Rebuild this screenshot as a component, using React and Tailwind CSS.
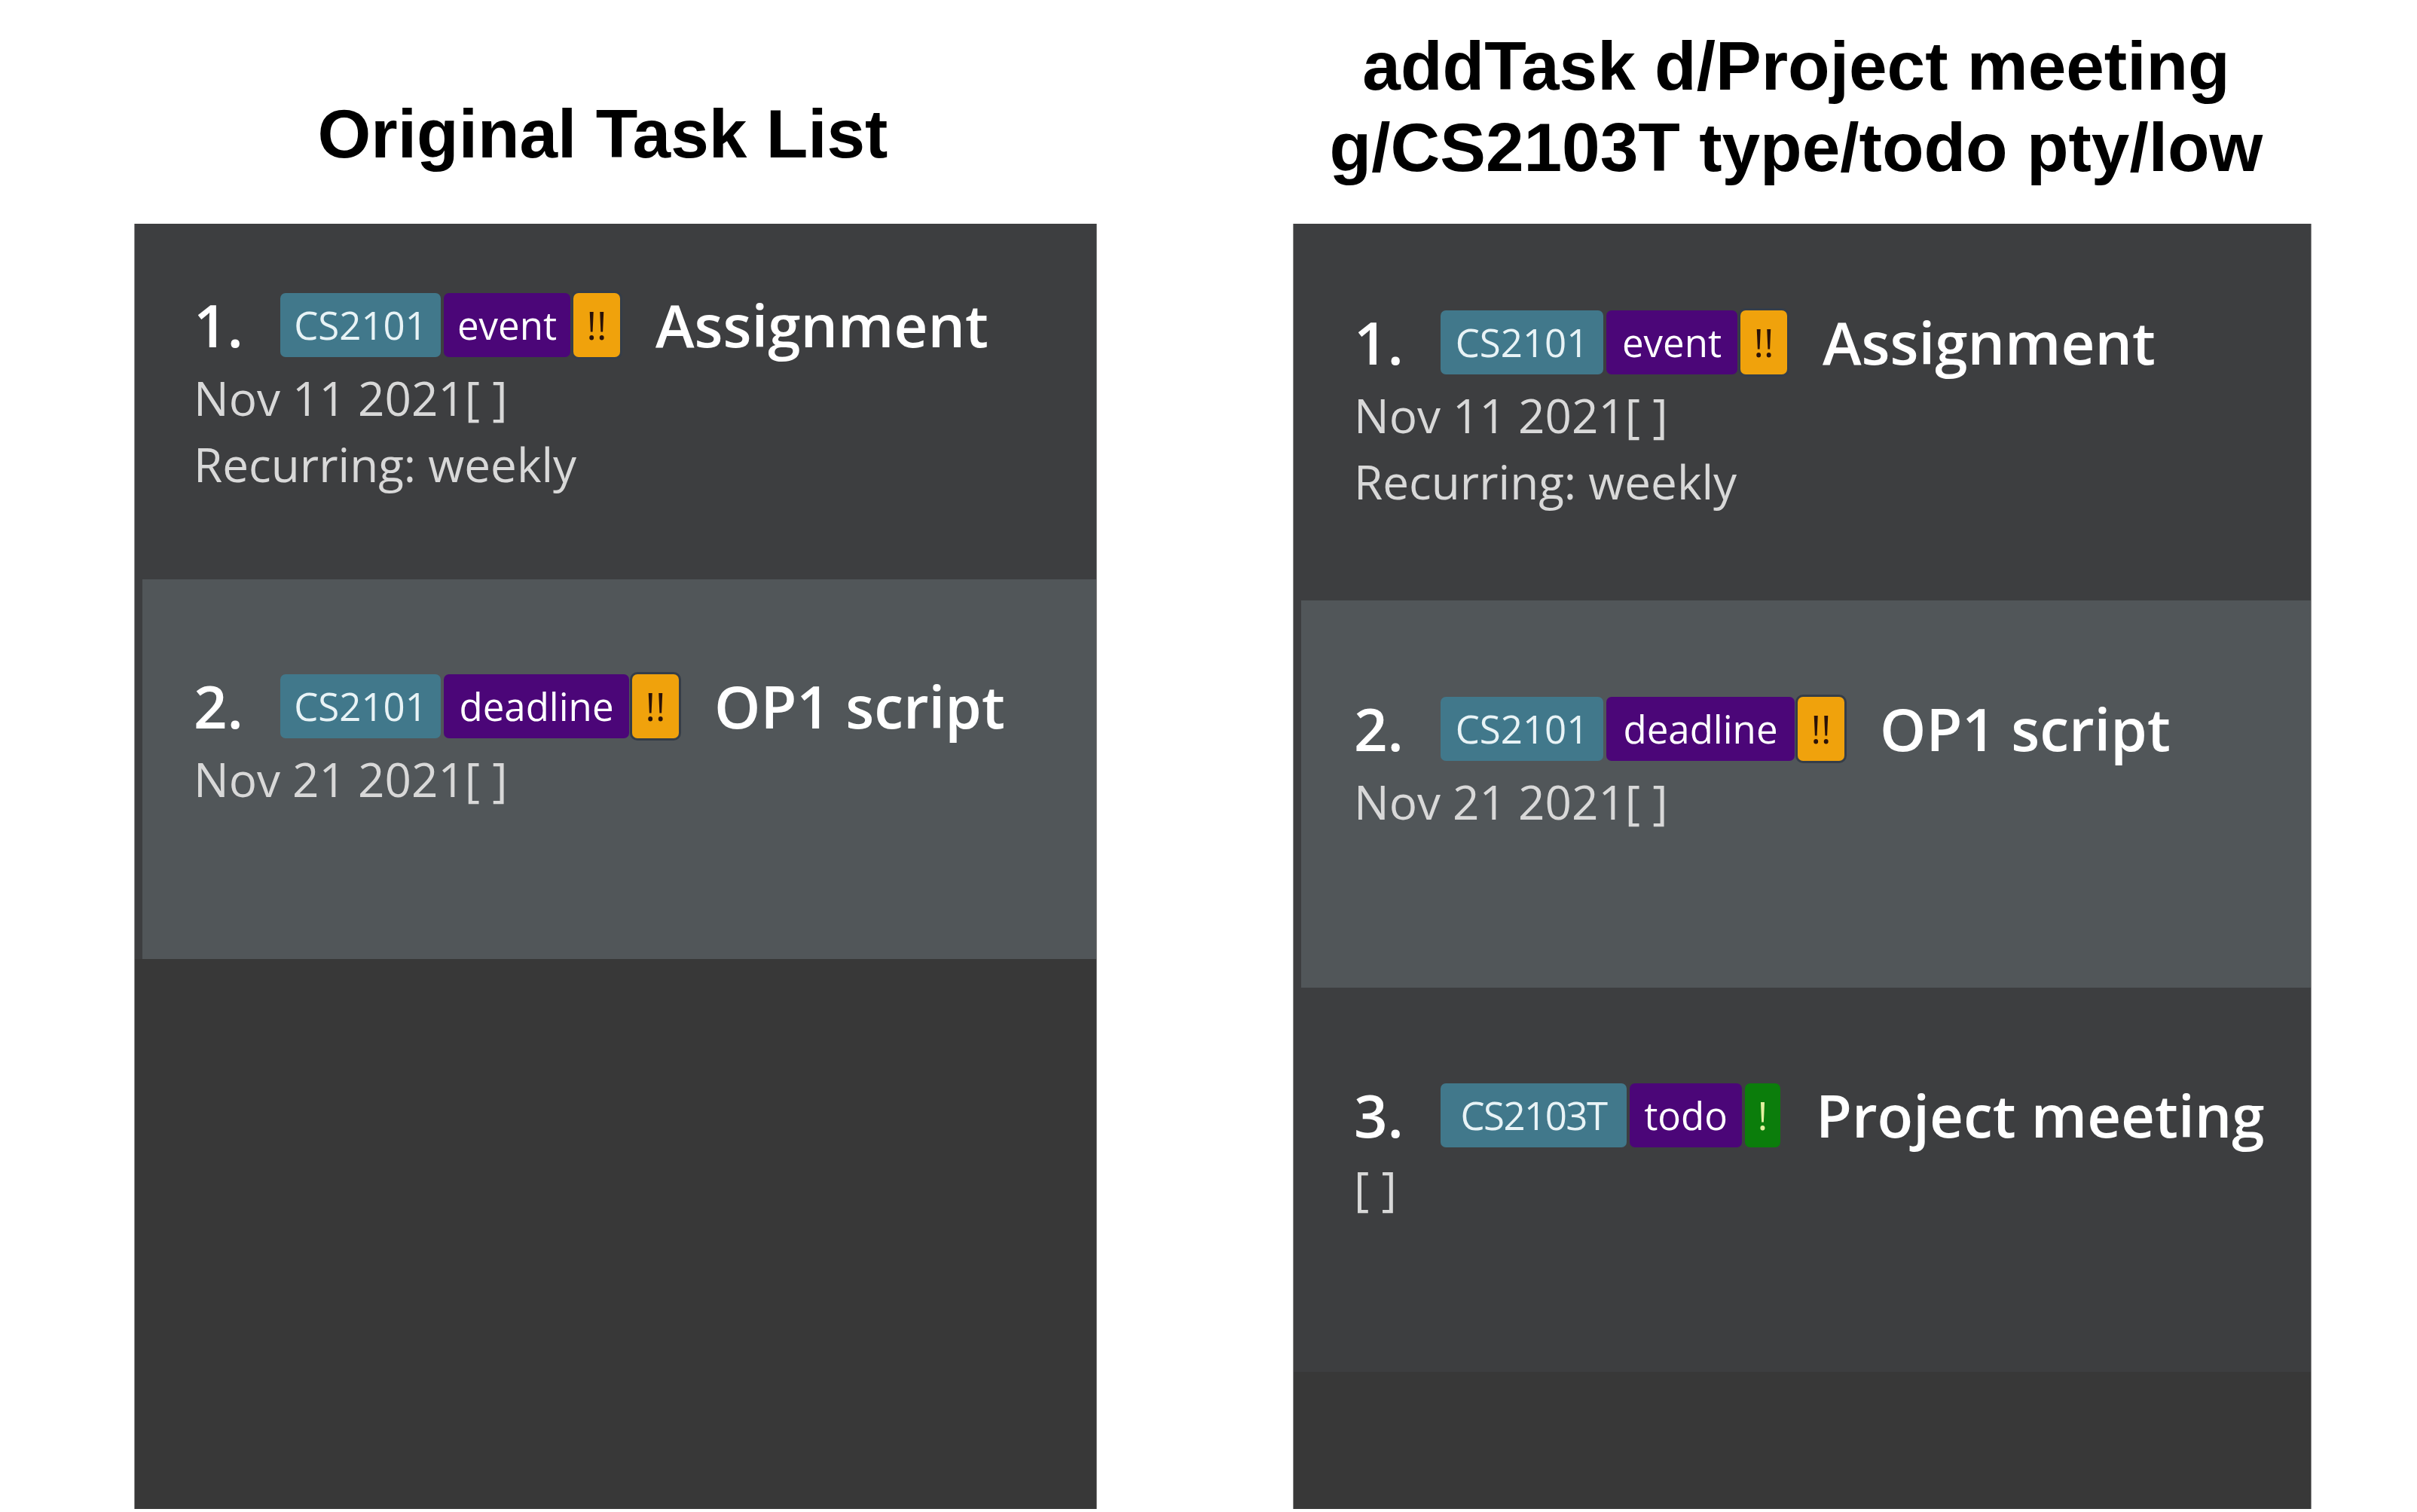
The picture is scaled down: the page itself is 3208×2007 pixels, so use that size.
import React from "react";

const APP_FONT = { fontFamily: '"Open Sans", "Noto Sans", sans-serif' };

function Badge({ children, className }) {
  return (
    <span
      className={`flex h-[85px] shrink-0 items-center justify-center rounded-[7px] text-[51px] leading-none whitespace-pre ${className}`}
    >
      {children}
    </span>
  );
}

function Task({ num, module, moduleClass, type, typeClass, pri, title, lines }) {
  return (
    <div>
      <div className="flex h-[85px] items-center">
        <span className="w-[115px] shrink-0 text-[78px] font-semibold leading-[85px] text-white">
          {num}.
        </span>
        <div className="flex items-center gap-[4px]">
          <Badge className={`bg-[#41788b] text-[#e8f3f6] ${moduleClass}`}>{module}</Badge>
          <Badge className={`bg-[#4b0678] text-white ${typeClass}`}>{type}</Badge>
          {pri === "high" ? (
            <Badge className="w-[62px] bg-[#f0a20c] text-[#2a1208] shadow-[0_0_0_3px_#353d48]">!!</Badge>
          ) : (
            <Badge className="w-[47px] bg-[#0b7d0b] text-[#e4f0a0]">!</Badge>
          )}
        </div>
        <span className="ml-[47px] whitespace-pre text-[78px] font-semibold leading-[85px] text-white">
          {title}
        </span>
      </div>
      <div className="mt-[10px] text-[62px] leading-[88px] text-[#d8d8d8]">
        {lines.map((l) => (
          <div key={l} className="whitespace-pre">
            {l}
          </div>
        ))}
      </div>
    </div>
  );
}

export default function App() {
  return (
    <div className="flex h-[2007px] w-[3208px] overflow-hidden bg-white">
      {/* Left column */}
      <div className="flex w-[1600px] shrink-0 flex-col">
        <div
          className="h-[297px] pt-[124px] text-center text-[91px] font-bold leading-[108px] text-black"
          style={{ fontFamily: '"Liberation Sans", Arial, sans-serif' }}
        >
          Original Task List
        </div>
        <div
          className="ml-[178px] flex h-[1706px] w-[1278px] flex-col border-x border-[#8c8c8c] bg-[#383838]"
          style={APP_FONT}
        >
          <div className="h-[472px] bg-[#3d3e40] pl-[78px] pt-[92px]">
            <Task
              num="1"
              module="CS2101"
              moduleClass="w-[213px]"
              type="event"
              typeClass="w-[168px]"
              pri="high"
              title="Assignment"
              lines={["Nov 11 2021[ ]", "Recurring: weekly"]}
            />
          </div>
          <div className="h-[504px] bg-[#3d3e40]">
            <div className="ml-[10px] h-full bg-[#515659] pl-[68px] pt-[126px]">
              <Task
                num="2"
                module="CS2101"
                moduleClass="w-[213px]"
                type="deadline"
                typeClass="w-[246px]"
                pri="high"
                title="OP1 script"
                lines={["Nov 21 2021[ ]"]}
              />
            </div>
          </div>
        </div>
      </div>

      {/* Right column */}
      <div className="flex w-[1568px] shrink-0 flex-col">
        <div
          className="h-[297px] pt-[34px] text-center text-[91px] font-bold leading-[108px] text-black"
          style={{ fontFamily: '"Liberation Sans", Arial, sans-serif' }}
        >
          <div>addTask d/Project meeting</div>
          <div>g/CS2103T type/todo pty/low</div>
        </div>
        <div
          className="ml-[116px] flex h-[1706px] w-[1352px] flex-col border-x border-[#8c8c8c] bg-[#383838]"
          style={APP_FONT}
        >
          <div className="h-[500px] bg-[#3d3e40] pl-[80px] pt-[115px]">
            <Task
              num="1"
              module="CS2101"
              moduleClass="w-[216px]"
              type="event"
              typeClass="w-[174px]"
              pri="high"
              title="Assignment"
              lines={["Nov 11 2021[ ]", "Recurring: weekly"]}
            />
          </div>
          <div className="h-[514px] bg-[#3d3e40]">
            <div className="ml-[10px] h-full bg-[#515659] pl-[70px] pt-[128px]">
              <Task
                num="2"
                module="CS2101"
                moduleClass="w-[216px]"
                type="deadline"
                typeClass="w-[250px]"
                pri="high"
                title="OP1 script"
                lines={["Nov 21 2021[ ]"]}
              />
            </div>
          </div>
          <div className="h-[510px] bg-[#3d3e40] pl-[80px] pt-[127px]">
            <Task
              num="3"
              module="CS2103T"
              moduleClass="w-[247px] tracking-[-0.03em]"
              type="todo"
              typeClass="w-[149px]"
              pri="low"
              title="Project meeting"
              lines={["[ ]"]}
            />
          </div>
        </div>
      </div>
    </div>
  );
}
